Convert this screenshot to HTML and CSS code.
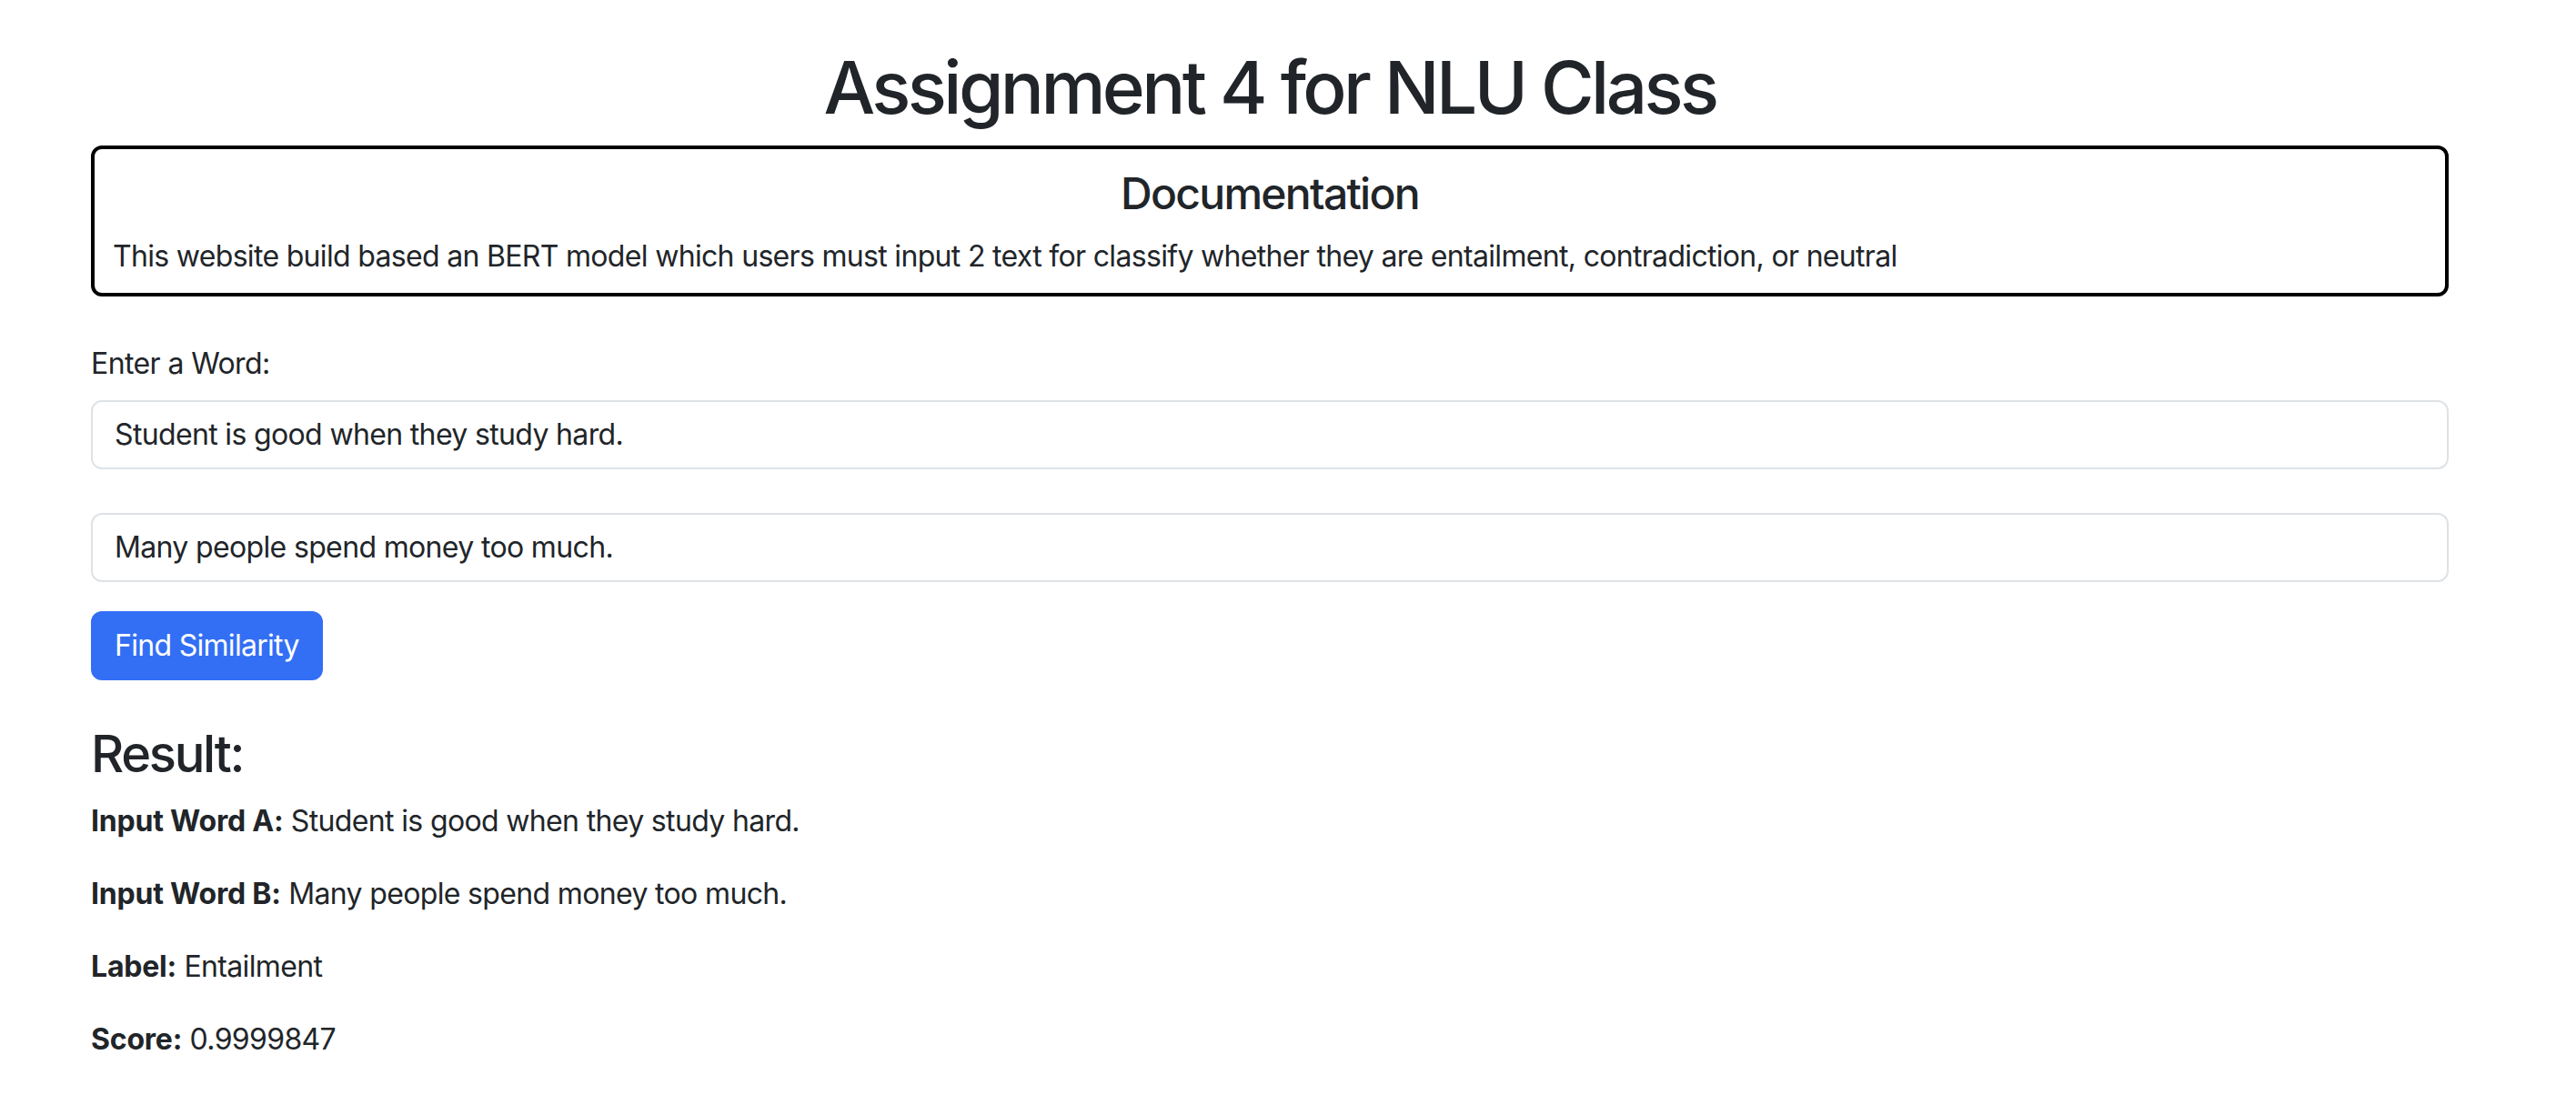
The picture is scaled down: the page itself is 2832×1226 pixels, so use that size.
FILE: index.html
```html
<!DOCTYPE html>
<html lang="en">
<head>
<meta charset="utf-8">
<title>Assignment 4 for NLU Class</title>
<link rel="stylesheet" href="styles.css">
</head>
<body>
<div class="container">
  <h1 class="title">Assignment 4 for NLU Class</h1>
  <div class="doc-box">
    <h4 class="doc-title">Documentation</h4>
    <p class="doc-text">This website build based an BERT model which users must input 2 text for classify whether they are entailment, contradiction, or neutral</p>
  </div>
  <form class="form">
    <div class="group">
      <label class="label">Enter a Word:</label>
      <input class="input" type="text" value="Student is good when they study hard.">
    </div>
    <div class="group2">
      <input class="input" type="text" value="Many people spend money too much.">
    </div>
    <button type="button" class="btn">Find Similarity</button>
  </form>
  <h3 class="result-title">Result:</h3>
  <p class="row"><strong>Input Word A:</strong> Student is good when they study hard.</p>
  <p class="row"><strong>Input Word B:</strong> Many people spend money too much.</p>
  <p class="row"><strong>Label:</strong> Entailment</p>
  <p class="row"><strong>Score:</strong> 0.9999847</p>
</div>
</body>
</html>
```
FILE: styles.css
```css
html, body {
  margin: 0;
  padding: 0;
  background: #ffffff;
}
body {
  font-family: Inter, "Noto Sans", "Liberation Sans", sans-serif;
  font-size: 32px;
  line-height: 1.5;
  color: #212529;
}
.container {
  width: 2592px;
  margin-left: 100px;
}
.title {
  margin: 48px 0 16px;
  font-size: 80px;
  font-weight: 500;
  line-height: 1.2;
  text-align: center;
  letter-spacing: -3.6px;
}
.doc-box {
  border: 4px solid #000;
  border-radius: 12px;
  padding: 20px 20px 16px;
}
.doc-title {
  margin: 0 0 16px;
  font-size: 48px;
  font-weight: 500;
  line-height: 1.2;
  text-align: center;
  letter-spacing: -1.7px;
}
.doc-text {
  margin: 0;
  letter-spacing: -0.68px;
}
.form {
  margin-top: 50px;
}
.label {
  display: block;
  margin-bottom: 16px;
  letter-spacing: -0.6px;
}
.group {
  margin-bottom: 48px;
}
.group2 {
  margin-bottom: 32px;
}
.input {
  display: block;
  box-sizing: border-box;
  width: 100%;
  height: 76px;
  padding: 12px 24px;
  font-family: inherit;
  font-size: 32px;
  line-height: 48px;
  color: #212529;
  background: #fff;
  border: 2px solid #dee2e6;
  border-radius: 12px;
  outline: none;
  letter-spacing: -0.65px;
}
.btn {
  display: inline-block;
  height: 76px;
  padding: 12px 24px;
  font-family: inherit;
  font-size: 32px;
  line-height: 48px;
  color: #fff;
  background: #336ff5;
  border: 2px solid #336ff5;
  border-radius: 12px;
  letter-spacing: -0.7px;
}
.result-title {
  margin: 48px 0 16px;
  font-size: 56px;
  font-weight: 500;
  line-height: 1.2;
  letter-spacing: -2.3px;
}
.row {
  margin: 0 0 32px;
  letter-spacing: -0.65px;
}
.row strong {
  font-weight: 700;
  letter-spacing: -0.2px;
}
```
